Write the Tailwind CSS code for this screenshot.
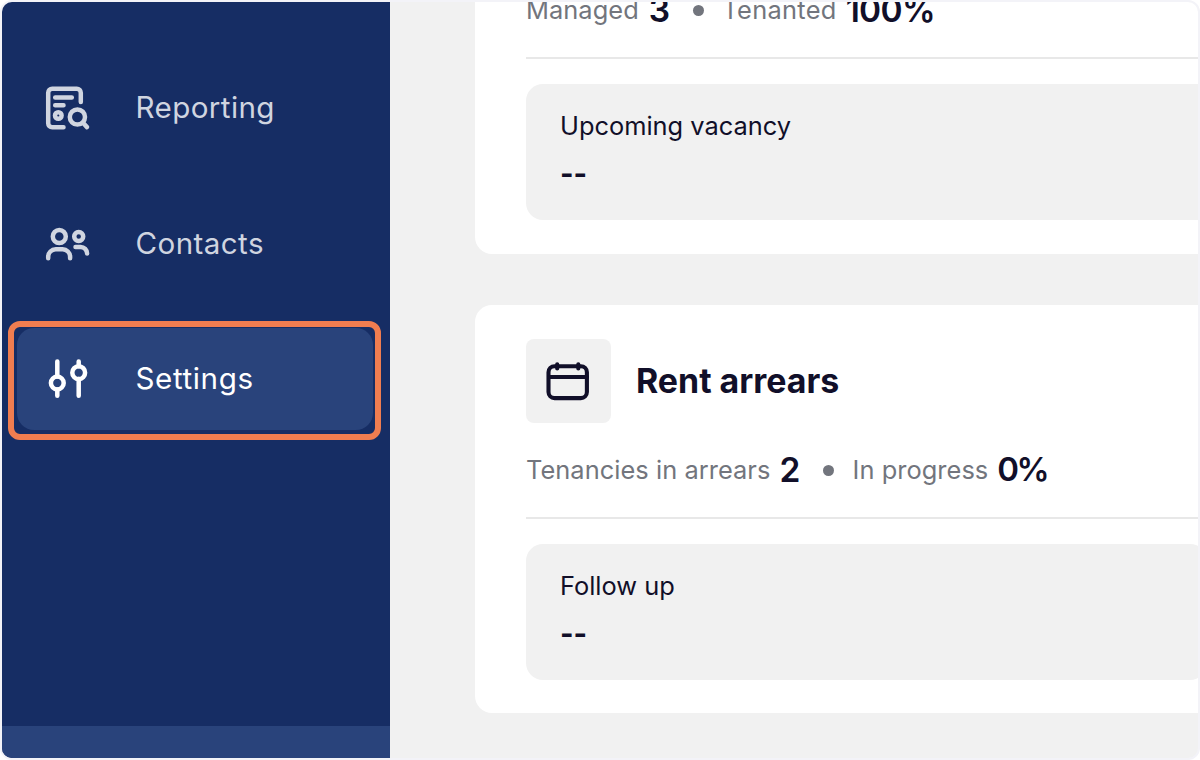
<!DOCTYPE html>
<html lang="en">
<head>
  <meta charset="UTF-8">
  <title>Dashboard</title>
  <script src="https://cdn.jsdelivr.net/npm/@tailwindcss/browser@4"></script>
</head>
<body class="h-screen overflow-hidden bg-white font-['Inter',sans-serif] [font-optical-sizing:none]">
  <div class="flex h-[760px] w-[1200px] overflow-hidden rounded-xl border-2 border-[#f3f3f8] bg-[#f1f1f1]">

    <aside class="flex w-[388px] shrink-0 flex-col justify-between bg-[#162d64]">
      <nav class="flex flex-col gap-[33.7px] pt-[54.5px] pr-[17px] pl-[15px] text-[29.6px] font-[440] tracking-[0.4px] text-[#d0d5e0]">
        <a class="flex h-[102px] items-center gap-[42.500px] pl-[26px]">
          <svg class="size-[50px]" viewBox="0 0 50 50" fill="none" stroke="currentColor" stroke-width="4.5" stroke-linecap="round" stroke-linejoin="round">
            <path d="M37.800 19V9.700a4 4 0 0 0-4-4H9.200a4 4 0 0 0-4 4v30.600a4 4 0 0 0 4 4H20.500"/>
            <path d="M12.200 14.500h16.600M12.200 22.200h8.300"/>
            <circle cx="15.300" cy="32.500" r="3.300"/>
            <circle cx="34.400" cy="34" r="7.600"/>
            <path d="M40 39.800l4 4.300"/>
          </svg>
          <span>Reporting</span>
        </a>
        <a class="flex h-[102px] items-center gap-[42.500px] pl-[26px]">
          <svg class="size-[50px]" viewBox="0 0 50 50" fill="none" stroke="currentColor" stroke-width="4.5" stroke-linecap="round" stroke-linejoin="round">
            <circle cx="16.300" cy="18.500" r="6.500"/>
            <path d="M5.200 40.300v-1.500a7.500 7.500 0 0 1 7.500-7.500h6.900a7.500 7.500 0 0 1 7.500 7.500v1.500"/>
            <circle cx="35.700" cy="18.500" r="4.500"/>
            <path d="M32.500 29h5.100a6.500 6.500 0 0 1 6.500 6.500"/>
          </svg>
          <span>Contacts</span>
        </a>
        <a class="relative flex h-[102px] items-center gap-[42.500px] rounded-[17px] bg-[#29437b] pl-[26px] text-white">
          <svg class="size-[50px]" viewBox="0 0 50 50" fill="none" stroke="currentColor" stroke-width="4.5" stroke-linecap="round">
            <path d="M14.300 7.600v15M14.300 35.400v6.400M35.700 7.600v4.700M35.700 25.100v16.700"/>
            <circle cx="14.300" cy="29" r="6.400"/>
            <circle cx="35.700" cy="18.700" r="6.400"/>
          </svg>
          <span class="-mt-[1px] tracking-[0.6px]">Settings</span>
          <span class="absolute -top-[7px] -right-[8px] -bottom-[10px] -left-[9px] rounded-xl border-6 border-[#f07d50]"></span>
        </a>
      </nav>
      <div class="h-[32px] bg-[#29437b]"></div>
    </aside>

    <main class="flex flex-1 flex-col gap-[51px] overflow-hidden pl-[85px] text-[#110f29]">
      <section class="-mt-[26px] h-[277.500px] shrink-0 rounded-bl-[17px] bg-white pl-[51px]">
        <div class="flex h-[68px] items-center text-[25.4px] tracking-[0.05px] text-[#72757d]">
          <span>Managed</span>
          <span class="ml-[10px] text-[33.5px] font-semibold tracking-[-0.7px] text-[#110f29]">3</span>
          <span class="mr-[18px] ml-[24px] size-[11px] rounded-full bg-[#72757d]"></span>
          <span class="tracking-[0.3px]">Tenanted</span>
          <span class="ml-[9px] text-[33.5px] font-semibold tracking-[-0.7px] text-[#110f29]">100%</span>
        </div>
        <div class="mt-[13px] h-[2px] bg-[#e8e8e8]"></div>
        <div class="mt-[25px] h-[136px] rounded-l-[17px] bg-[#f1f1f1] pt-[25px] pl-[34px]">
          <p class="text-[25.4px] leading-[34px]">Upcoming vacancy</p>
          <p class="mt-[10px] text-[29px] leading-[42px] font-bold">--</p>
        </div>
      </section>

      <section class="h-[408.500px] shrink-0 rounded-l-[17px] bg-white pt-[34px] pl-[51px]">
        <div class="flex items-center gap-[25.500px]">
          <div class="flex size-[84.500px] items-center justify-center rounded-lg bg-[#f1f1f1]">
            <svg class="size-[50px]" viewBox="0 0 50 50" fill="none" stroke="currentColor" stroke-width="4.1" stroke-linecap="round" stroke-linejoin="round">
              <rect x="5.500" y="10.300" width="38.400" height="31.800" rx="6"/>
              <path d="M6 21h38M14.200 8.300v4.200M35.300 8.300v4.200"/>
            </svg>
          </div>
          <h2 class="pt-[1px] text-[33.9px] font-[650]">Rent arrears</h2>
        </div>
        <div class="mt-[13px] flex h-[68px] items-center text-[25.4px] tracking-[0.05px] text-[#72757d]">
          <span>Tenancies in arrears</span>
          <span class="ml-[9px] text-[33.5px] font-semibold tracking-[-0.7px] text-[#110f29]">2</span>
          <span class="mr-[19px] ml-[23px] size-[11px] rounded-full bg-[#72757d]"></span>
          <span>In progress</span>
          <span class="ml-[9px] text-[33px] font-semibold tracking-[-2.5px] text-[#110f29]">0%</span>
        </div>
        <div class="mt-[13px] h-[2px] bg-[#e8e8e8]"></div>
        <div class="mt-[25px] -mr-[9px] h-[136px] rounded-[17px] bg-[#f1f1f1] pt-[25px] pl-[34px]">
          <p class="text-[25.4px] leading-[34px]">Follow up</p>
          <p class="mt-[10px] text-[29px] leading-[42px] font-bold">--</p>
        </div>
      </section>
    </main>
  </div>
</body>
</html>
